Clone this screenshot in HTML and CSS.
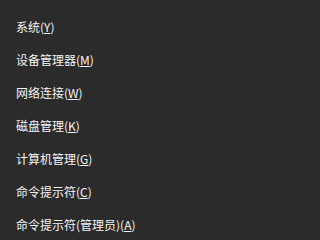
FILE: index.html
```html
<!DOCTYPE html>
<html lang="zh-CN">
<head>
<meta charset="utf-8">
<link rel="stylesheet" href="styles.css">
</head>
<body>
<ul class="menu">
  <li class="item">系统(<u>Y</u>)</li>
  <li class="item">设备管理器(<u>M</u>)</li>
  <li class="item">网络连接(<u>W</u>)</li>
  <li class="item">磁盘管理(<u>K</u>)</li>
  <li class="item">计算机管理(<u>G</u>)</li>
  <li class="item">命令提示符(<u>C</u>)</li>
  <li class="item">命令提示符(管理员)(<u>A</u>)</li>
</ul>
</body>
</html>
```
FILE: styles.css
```css
html, body {
  margin: 0;
  padding: 0;
  background: #2b2b2b;
}
.menu {
  list-style: none;
  margin: 0;
  padding: 10px 0 0 16px;
  font-family: "Noto Sans CJK SC", "Microsoft YaHei", sans-serif;
  font-size: 12px;
  color: #f5f5f5;
}
.item {
  height: 33px;
  line-height: 33px;
  white-space: nowrap;
}
.item u {
  text-decoration: underline;
  text-underline-offset: 1px;
}
```
